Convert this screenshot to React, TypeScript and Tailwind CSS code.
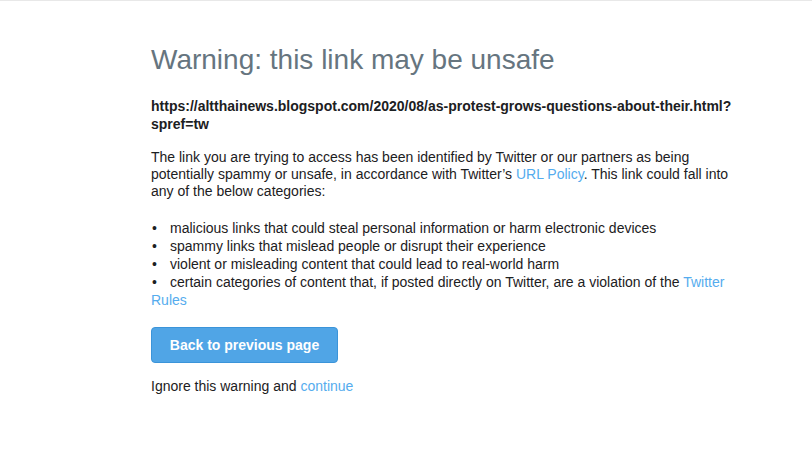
import React from 'react';

const bullets = [
  'malicious links that could steal personal information or harm electronic devices',
  'spammy links that mislead people or disrupt their experience',
  'violent or misleading content that could lead to real-world harm',
];

export default function App() {
  return (
    <div className="min-h-[465px] bg-white border-t border-[#e8e8e8] font-['Liberation_Sans',Arial,sans-serif] text-[14px] leading-[18px] text-[#1c2022]">
      <div className="pl-[151px] pt-[43px] w-[736px]">
        {/* 제목 */}
        <h1 className="text-[28px] leading-[32px] text-[#66757f]">Warning: this link may be unsafe</h1>

        {/* 대상 URL */}
        <p className="mt-[21px] font-bold break-words">
          https://altthainews.blogspot.com/2020/08/as-protest-grows-questions-about-their.html?spref=tw
        </p>

        <p className="mt-[16px] leading-[17px]">
          The link you are trying to access has been identified by Twitter or our partners as being potentially
          spammy or unsafe, in accordance with Twitter’s{' '}
          <a className="text-[#55acee]">URL Policy</a>. This link could fall into any of the below categories:
        </p>

        <ul className="mt-[19px]">
          {bullets.map((b) => (
            <li key={b}>
              <span className="inline-block w-[19px] pl-[1px]">•</span>
              {b}
            </li>
          ))}
          <li>
            <span className="inline-block w-[19px] pl-[1px]">•</span>
            certain categories of content that, if posted directly on Twitter, are a violation of the{' '}
            <a className="text-[#55acee]">Twitter Rules</a>
          </li>
        </ul>

        <button className="mt-[18px] h-[36px] w-[187px] rounded-[4px] border border-[#3b94d9] bg-[#50a5e6] text-[14px] font-bold text-white">
          Back to previous page
        </button>

        <p className="mt-[14px]">
          Ignore this warning and <a className="text-[#55acee]">continue</a>
        </p>
      </div>
    </div>
  );
}
